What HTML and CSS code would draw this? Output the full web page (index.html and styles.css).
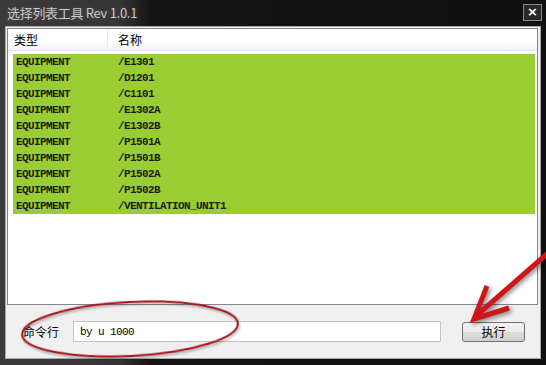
FILE: index.html
```html
<!DOCTYPE html>
<html lang="zh-CN">
<head>
    <meta charset="UTF-8">
    <title>选择列表工具 Rev 1.0.1</title>
    <link rel="stylesheet" href="styles.css">
</head>
<body>

    <div class="window">
        <div class="titlebar">
            <span class="title">选择列表工具 Rev 1.0.1</span>
            <span class="close-btn">×</span>
        </div>

        <div class="client">
            <div class="list">
                <div class="list-head">
                    <div class="col col-type">类型</div>
                    <div class="col col-name">名称</div>
                </div>
                <div class="rows">
                    <div class="row"><span class="cell-type">EQUIPMENT</span><span>/E1301</span></div>
                    <div class="row"><span class="cell-type">EQUIPMENT</span><span>/D1201</span></div>
                    <div class="row"><span class="cell-type">EQUIPMENT</span><span>/C1101</span></div>
                    <div class="row"><span class="cell-type">EQUIPMENT</span><span>/E1302A</span></div>
                    <div class="row"><span class="cell-type">EQUIPMENT</span><span>/E1302B</span></div>
                    <div class="row"><span class="cell-type">EQUIPMENT</span><span>/P1501A</span></div>
                    <div class="row"><span class="cell-type">EQUIPMENT</span><span>/P1501B</span></div>
                    <div class="row"><span class="cell-type">EQUIPMENT</span><span>/P1502A</span></div>
                    <div class="row"><span class="cell-type">EQUIPMENT</span><span>/P1502B</span></div>
                    <div class="row"><span class="cell-type">EQUIPMENT</span><span>/VENTILATION_UNIT1</span></div>
                </div>
            </div>

            <div class="cmd-bar">
                <label class="cmd-label" for="cmd">命令行</label>
                <input type="text" id="cmd" class="cmd-input" value="by u 1000">
                <button class="run-btn">执行</button>
            </div>
        </div>

        <!-- red annotations drawn over the screenshot -->
        <svg class="notes" width="546" height="365" viewBox="0 0 546 365">
            <ellipse class="ring" cx="130" cy="329" rx="108" ry="27" transform="rotate(-3 130 329)"/>
            <g class="arrow">
                <line x1="556" y1="246" x2="476" y2="316"/>
                <polyline points="487,286 474,319 509,308"/>
            </g>
        </svg>
    </div>

</body>
</html>
```

FILE: styles.css
```css
* {
    margin: 0;
    padding: 0;
    box-sizing: border-box;
}

body {
    background-color: #000;
    font-family: "Noto Sans CJK SC", "Liberation Sans", sans-serif;
    font-size: 12px;
    color: #000;
}

.window {
    position: relative;
    width: 546px;
    height: 365px;
    display: flex;
    flex-direction: column;
    padding: 0 5px 6px 5px;
    background: linear-gradient(to right, #3b3b3b 0, #353535 120px, #141414 150px, #101010 100%);
}

.titlebar {
    height: 26px;
    display: flex;
    align-items: center;
    justify-content: space-between;
    padding: 0 0 2px 2px;
}

.title {
    color: #c8c8c8;
    font-size: 13px;
    letter-spacing: -0.3px;
    text-shadow: 0 0 4px #555;
}

.close-btn {
    width: 19px;
    height: 17px;
    border: 1px solid #8a8a8a;
    background-color: #2a2a2a;
    color: #fff;
    font-family: "DejaVu Sans", sans-serif;
    font-size: 13px;
    font-weight: bold;
    line-height: 14px;
    text-align: center;
    margin-right: -1px;
}

.client {
    flex: 1;
    display: flex;
    flex-direction: column;
    background-color: #f0f0f0;
    border: 1px solid #a8a8a8;
    padding: 1px 2px 0 1px;
}

.list {
    height: 277px;
    background-color: #fff;
    border: 1px solid #828790;
}

.list-head {
    display: flex;
    height: 22px;
    background: linear-gradient(#fff, #fff 55%, #f2f3f5);
    border-bottom: 1px solid #e5e5e5;
    font-size: 12px;
    line-height: 21px;
}

.col {
    padding-left: 6px;
}

.col-type {
    width: 100px;
    border-right: 1px solid #e8e8e8;
}

.col-name {
    padding-left: 10px;
}

.rows {
    margin: 3px 2px 0 5px;
}

.row {
    display: flex;
    height: 16px;
    align-items: center;
    padding-left: 3px;
    background-color: #9acd32;
    font-family: "Liberation Mono", monospace;
    font-size: 11px;
    font-weight: bold;
    letter-spacing: -0.6px;
    color: #1a1a1a;
}

.cell-type {
    width: 102px;
}

.cmd-bar {
    flex: 1;
    display: flex;
    align-items: center;
    padding: 0 13px 0 16px;
}

.cmd-label {
    font-size: 12px;
    margin-right: 14px;
}

.cmd-input {
    flex: 1;
    height: 21px;
    border: 1px solid #c5c5c5;
    background-color: #fff;
    padding: 0 6px;
    font-family: "Liberation Mono", monospace;
    font-size: 11px;
    letter-spacing: -0.6px;
    color: #000;
    outline: none;
}

.run-btn {
    width: 63px;
    height: 20px;
    margin-left: 21px;
    border: 1px solid #707070;
    border-radius: 3px;
    background: linear-gradient(#f2f2f2, #ebebeb 50%, #dddddd 51%, #cfcfcf);
    font-family: "Noto Sans CJK SC", sans-serif;
    font-size: 12px;
    color: #000;
}

.notes {
    position: absolute;
    top: 0;
    left: 0;
    pointer-events: none;
}

.ring {
    fill: none;
    stroke: #a8101c;
    stroke-width: 2;
    filter: drop-shadow(1px 2px 1px rgba(0, 0, 0, 0.3));
}

.arrow {
    fill: none;
    stroke: #d0141c;
    stroke-width: 5;
    stroke-linecap: butt;
    stroke-linejoin: miter;
    filter: drop-shadow(2px 2px 2px rgba(0, 0, 0, 0.45));
}
```
